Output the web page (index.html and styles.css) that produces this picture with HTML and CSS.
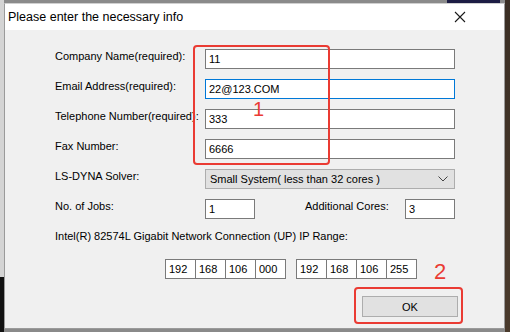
FILE: index.html
```html
<!DOCTYPE html>
<html lang="en">
<head>
    <meta charset="UTF-8">
    <title>Please enter the necessary info</title>
    <link rel="stylesheet" href="styles.css">
</head>
<body>
    <div class="window">
        <div class="titlebar">
            <span class="title">Please enter the necessary info</span>
            <svg class="close" width="12" height="12" viewBox="0 0 12 12">
                <path d="M1 1 L11 11 M11 1 L1 11" stroke="#1a1a1a" stroke-width="1.1" fill="none"/>
            </svg>
        </div>
        <div class="content">
            <div class="row">
                <label>Company Name(required):</label>
                <input class="field" type="text" value="11">
            </div>
            <div class="row">
                <label>Email Address(required):</label>
                <input class="field focused" type="text" value="22@123.COM">
            </div>
            <div class="row">
                <label>Telephone Number(required):</label>
                <input class="field" type="text" value="333">
            </div>
            <div class="row">
                <label>Fax Number:</label>
                <input class="field" type="text" value="6666">
            </div>
            <div class="row">
                <label>LS-DYNA Solver:</label>
                <div class="select">
                    <span>Small System( less than 32 cores )</span>
                    <svg width="10" height="6" viewBox="0 0 10 6">
                        <path d="M0.5 0.5 L5 5 L9.5 0.5" stroke="#444" stroke-width="1" fill="none"/>
                    </svg>
                </div>
            </div>
            <div class="row">
                <label>No. of Jobs:</label>
                <input class="field small" type="text" value="1">
                <label class="cores-label">Additional Cores:</label>
                <input class="field small" type="text" value="3">
            </div>
            <div class="row">
                <label class="wide">Intel(R) 82574L Gigabit Network Connection (UP) IP Range:</label>
            </div>
            <div class="ip-row">
                <div class="ip">
                    <input type="text" value="192">
                    <input type="text" value="168">
                    <input type="text" value="106">
                    <input type="text" value="000">
                </div>
                <div class="ip">
                    <input type="text" value="192">
                    <input type="text" value="168">
                    <input type="text" value="106">
                    <input type="text" value="255">
                </div>
            </div>
            <div class="actions">
                <button class="ok">OK</button>
            </div>
        </div>

        <!-- red annotations drawn over the dialog -->
        <div class="mark mark-fields"></div>
        <span class="mark-num num-1">1</span>
        <div class="mark mark-ok"></div>
        <span class="mark-num num-2">2</span>
    </div>
</body>
</html>
```

FILE: styles.css
```css
html, body {
    margin: 0;
    padding: 0;
}

body {
    width: 510px;
    height: 332px;
    overflow: hidden;
    background:
        linear-gradient(#1c1c44, #1c1c44) 447px 0 / 53px 3px no-repeat,
        linear-gradient(#3a2e24, #4a3a2c) right top / 5px 100% no-repeat,
        linear-gradient(#d4d4d4 0, #d4d4d4 277px, #111 277px) left top / 4px 100% no-repeat,
        #8a8a8a;
    font-family: 'Liberation Sans', Arial, sans-serif;
    font-size: 11px;
    color: #000;
}

.window {
    position: relative;
    box-sizing: border-box;
    width: 501px;
    height: 326px;
    margin: 3px 0 0 4px;
    background-color: #f0f0f0;
    border: 1px solid #9a9a9a;
    border-top-color: #d0d0d0;
}

.titlebar {
    display: flex;
    align-items: center;
    justify-content: space-between;
    height: 26px;
    padding: 0 38px 0 3px;
    background-color: #fff;
}

.title {
    font-size: 12.5px;
    color: #000;
}

.close {
    display: block;
}

.content {
    padding: 19px 0 0 50px;
}

.row {
    display: flex;
    height: 20px;
    margin-bottom: 10px;
}

.row label {
    width: 150px;
    line-height: 14px;
    flex-shrink: 0;
    white-space: nowrap;
}

.row label.wide {
    width: auto;
}

.row label.cores-label {
    width: 100px;
    margin-left: 50px;
}

.field {
    box-sizing: border-box;
    width: 250px;
    height: 20px;
    margin: 0;
    padding: 0 3px;
    border: 1px solid #7a7a7a;
    background: #fff;
    font: inherit;
    color: #000;
    outline: none;
}

.field.focused {
    border-color: #0078d7;
}

.field.small {
    width: 50px;
}

.select {
    box-sizing: border-box;
    display: flex;
    align-items: center;
    justify-content: space-between;
    width: 250px;
    height: 20px;
    padding: 0 6px 0 4px;
    border: 1px solid #adadad;
    background-color: #e1e1e1;
}

.select svg {
    display: block;
}

.ip-row {
    display: flex;
    gap: 10px;
    margin-left: 110px;
    height: 20px;
}

.ip {
    display: flex;
}

.ip input {
    box-sizing: border-box;
    width: 30px;
    height: 20px;
    margin: 0;
    padding: 0 3px;
    border: 1px solid #7a7a7a;
    border-left: none;
    background: #fff;
    font: inherit;
    color: #000;
    outline: none;
}

.ip input:first-child {
    width: 31px;
    border-left: 1px solid #7a7a7a;
}

.actions {
    display: flex;
    justify-content: flex-end;
    padding: 17px 46px 0 0;
}

.ok {
    width: 96px;
    height: 21px;
    padding: 0;
    border: 1px solid #adadad;
    background-color: #e1e1e1;
    font: inherit;
    color: #000;
}

.mark {
    position: absolute;
    box-sizing: border-box;
    border: 2.5px solid #ea3b33;
    border-radius: 4px;
}

.mark-fields {
    left: 188px;
    top: 41px;
    width: 137px;
    height: 120px;
}

.mark-ok {
    left: 349px;
    top: 283px;
    width: 109px;
    height: 37px;
}

.mark-num {
    position: absolute;
    color: #ea3b33;
    font-family: 'Liberation Sans', Arial, sans-serif;
    line-height: 1;
}

.num-1 {
    left: 248px;
    top: 95px;
    font-size: 20px;
}

.num-2 {
    left: 429px;
    top: 257px;
    font-size: 22px;
}
```
